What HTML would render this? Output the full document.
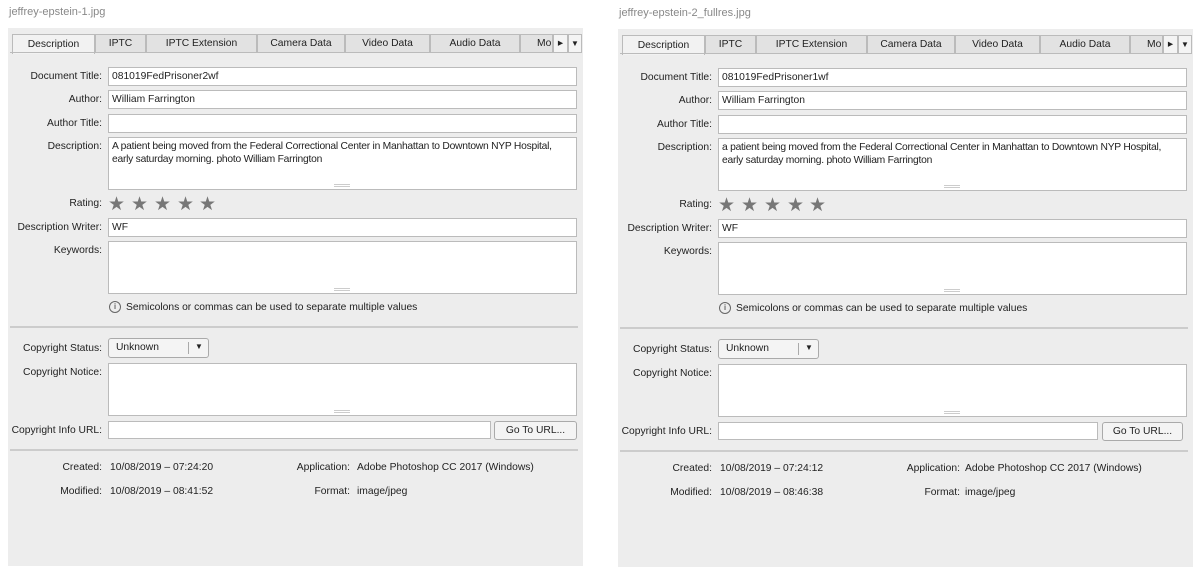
<!DOCTYPE html><html><head><style>
*{margin:0;padding:0;box-sizing:border-box}
body{width:1199px;height:566px;background:#fff;font-family:"Liberation Sans",sans-serif;font-size:10.3px;color:#222;position:relative;overflow:hidden}
.p{position:absolute;top:0;width:600px;height:566px}
.ttl{position:absolute;left:9px;top:6px;color:#888;font-size:11px}
.bg{position:absolute;left:8px;top:28px;width:575px;height:538px;background:#ededed}
.tab{position:absolute;top:34px;height:19px;border:1px solid #bbb;border-bottom:none;background:#e2e2e2;text-align:center;line-height:18px}
.tab.a{background:#f2f2f2;height:20px;top:34px;line-height:20px}
.tl{position:absolute;left:10px;top:52px;width:572px;border-top:1px solid #bbb}
.l{position:absolute;right:498px;text-align:right;white-space:nowrap}
.in{position:absolute;left:108px;width:469px;background:#fff;border:1px solid #bbb;padding:2px 3px;line-height:13px}
.d{letter-spacing:-0.25px}
.gr{position:absolute;width:16px;height:3px;border-top:1px solid #ccc;border-bottom:1px solid #ccc;left:334px}
.sep{position:absolute;left:10px;width:568px;border-top:2px solid #ccc}
.st{position:absolute;top:193px;color:#777;font-size:19px}
.btn{position:absolute;border:1px solid #aaa;border-radius:3px;background:#f4f4f4}
.v{position:absolute;left:110px;white-space:nowrap}
</style></head><body>
<div class="p" style="left:0">
<div class="ttl">jeffrey-epstein-1.jpg</div>
<div class="bg"></div>
<div class="tab a" style="left:12px;width:83px">Description</div>
<div class="tab" style="left:95px;width:51px">IPTC</div>
<div class="tab" style="left:146px;width:111px">IPTC Extension</div>
<div class="tab" style="left:257px;width:88px">Camera Data</div>
<div class="tab" style="left:345px;width:85px">Video Data</div>
<div class="tab" style="left:430px;width:90px">Audio Data</div>
<div class="tab" style="left:520px;width:33px;text-align:left;padding-left:16px;overflow:hidden">Mo</div>
<div class="tab" style="left:553px;width:15px;background:#f4f4f4">&#9656;</div>
<div class="tab" style="left:568px;width:14px;background:#f4f4f4;font-size:8px">&#9660;</div>
<div class="tl"></div>
<div class="l" style="top:71px">Document Title:</div><div class="in" style="top:67px;height:19px">081019FedPrisoner2wf</div>
<div class="l" style="top:94px">Author:</div><div class="in" style="top:90px;height:19px">William Farrington</div>
<div class="l" style="top:118px">Author Title:</div><div class="in" style="top:114px;height:19px"></div>
<div class="l" style="top:141px">Description:</div><div class="in d" style="top:137px;height:53px">A patient being moved from the Federal Correctional Center in Manhattan to Downtown NYP Hospital, early saturday morning. photo William Farrington</div><div class="gr" style="top:184px"></div>
<div class="l" style="top:198px">Rating:</div>
<div class="st" style="left:108px">★</div><div class="st" style="left:131px">★</div><div class="st" style="left:154px">★</div><div class="st" style="left:177px">★</div><div class="st" style="left:199px">★</div>
<div class="l" style="top:222px">Description Writer:</div><div class="in" style="top:218px;height:19px">WF</div>
<div class="l" style="top:245px">Keywords:</div><div class="in" style="top:241px;height:53px"></div><div class="gr" style="top:288px"></div>
<div style="position:absolute;left:109px;top:301px;width:12px;height:12px;border:1px solid #666;border-radius:50%;font-size:8px;text-align:center;line-height:10px">i</div>
<div class="v" style="left:126px;top:302px">Semicolons or commas can be used to separate multiple values</div>
<div class="sep" style="top:326px"></div>
<div class="l" style="top:343px">Copyright Status:</div>
<div class="btn" style="left:108px;top:338px;width:101px;height:20px;padding:3px 7px">Unknown<span style="position:absolute;left:79px;top:3px;height:12px;border-left:1px solid #aaa"></span><span style="position:absolute;left:86px;top:3px;font-size:8px">&#9660;</span></div>
<div class="l" style="top:367px">Copyright Notice:</div><div class="in" style="top:363px;height:53px"></div><div class="gr" style="top:410px"></div>
<div class="l" style="top:425px">Copyright Info URL:</div><div class="in" style="top:421px;height:18px;width:383px"></div>
<div class="btn" style="left:494px;top:421px;width:83px;height:19px;text-align:center;line-height:17px">Go To URL...</div>
<div class="sep" style="top:449px"></div>
<div class="l" style="top:462px">Created:</div><div class="v" style="top:462px">10/08/2019 – 07:24:20</div>
<div class="l" style="top:486px">Modified:</div><div class="v" style="top:486px">10/08/2019 – 08:41:52</div>
<div class="l" style="top:462px;right:250px">Application:</div><div class="v" style="top:462px;left:357px">Adobe Photoshop CC 2017 (Windows)</div>
<div class="l" style="top:486px;right:250px">Format:</div><div class="v" style="top:486px;left:357px">image/jpeg</div>
</div>
<div class="p" style="left:610px;top:1px">
<div class="ttl">jeffrey-epstein-2_fullres.jpg</div>
<div class="bg"></div>
<div class="tab a" style="left:12px;width:83px">Description</div>
<div class="tab" style="left:95px;width:51px">IPTC</div>
<div class="tab" style="left:146px;width:111px">IPTC Extension</div>
<div class="tab" style="left:257px;width:88px">Camera Data</div>
<div class="tab" style="left:345px;width:85px">Video Data</div>
<div class="tab" style="left:430px;width:90px">Audio Data</div>
<div class="tab" style="left:520px;width:33px;text-align:left;padding-left:16px;overflow:hidden">Mo</div>
<div class="tab" style="left:553px;width:15px;background:#f4f4f4">&#9656;</div>
<div class="tab" style="left:568px;width:14px;background:#f4f4f4;font-size:8px">&#9660;</div>
<div class="tl"></div>
<div class="l" style="top:71px">Document Title:</div><div class="in" style="top:67px;height:19px">081019FedPrisoner1wf</div>
<div class="l" style="top:94px">Author:</div><div class="in" style="top:90px;height:19px">William Farrington</div>
<div class="l" style="top:118px">Author Title:</div><div class="in" style="top:114px;height:19px"></div>
<div class="l" style="top:141px">Description:</div><div class="in d" style="top:137px;height:53px">a patient being moved from the Federal Correctional Center in Manhattan to Downtown NYP Hospital, early saturday morning. photo William Farrington</div><div class="gr" style="top:184px"></div>
<div class="l" style="top:198px">Rating:</div>
<div class="st" style="left:108px">★</div><div class="st" style="left:131px">★</div><div class="st" style="left:154px">★</div><div class="st" style="left:177px">★</div><div class="st" style="left:199px">★</div>
<div class="l" style="top:222px">Description Writer:</div><div class="in" style="top:218px;height:19px">WF</div>
<div class="l" style="top:245px">Keywords:</div><div class="in" style="top:241px;height:53px"></div><div class="gr" style="top:288px"></div>
<div style="position:absolute;left:109px;top:301px;width:12px;height:12px;border:1px solid #666;border-radius:50%;font-size:8px;text-align:center;line-height:10px">i</div>
<div class="v" style="left:126px;top:302px">Semicolons or commas can be used to separate multiple values</div>
<div class="sep" style="top:326px"></div>
<div class="l" style="top:343px">Copyright Status:</div>
<div class="btn" style="left:108px;top:338px;width:101px;height:20px;padding:3px 7px">Unknown<span style="position:absolute;left:79px;top:3px;height:12px;border-left:1px solid #aaa"></span><span style="position:absolute;left:86px;top:3px;font-size:8px">&#9660;</span></div>
<div class="l" style="top:367px">Copyright Notice:</div><div class="in" style="top:363px;height:53px"></div><div class="gr" style="top:410px"></div>
<div class="l" style="top:425px">Copyright Info URL:</div><div class="in" style="top:421px;height:18px;width:380px"></div>
<div class="btn" style="left:492px;top:421px;width:81px;height:19px;text-align:center;line-height:17px">Go To URL...</div>
<div class="sep" style="top:449px"></div>
<div class="l" style="top:462px">Created:</div><div class="v" style="top:462px">10/08/2019 – 07:24:12</div>
<div class="l" style="top:486px">Modified:</div><div class="v" style="top:486px">10/08/2019 – 08:46:38</div>
<div class="l" style="top:462px;right:250px">Application:</div><div class="v" style="top:462px;left:355px">Adobe Photoshop CC 2017 (Windows)</div>
<div class="l" style="top:486px;right:250px">Format:</div><div class="v" style="top:486px;left:355px">image/jpeg</div>
</div>
</body></html>
